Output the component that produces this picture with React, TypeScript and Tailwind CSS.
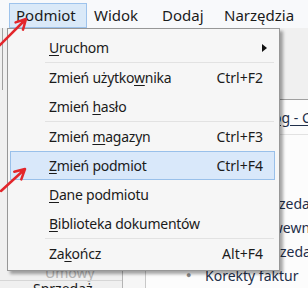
import React from 'react';

type Item =
  | { kind: 'sep' }
  | { kind: 'item'; pre: string; key: string; post: string; shortcut?: string; sub?: boolean; active?: boolean };

const menu: Item[] = [
  { kind: 'item', pre: '', key: 'U', post: 'ruchom', sub: true },
  { kind: 'sep' },
  { kind: 'item', pre: 'Zmień użytko', key: 'w', post: 'nika', shortcut: 'Ctrl+F2' },
  { kind: 'item', pre: 'Zmień ', key: 'h', post: 'asło' },
  { kind: 'sep' },
  { kind: 'item', pre: 'Zmień ', key: 'm', post: 'agazyn', shortcut: 'Ctrl+F3' },
  { kind: 'item', pre: '', key: 'Z', post: 'mień podmiot', shortcut: 'Ctrl+F4', active: true },
  { kind: 'item', pre: '', key: 'D', post: 'ane podmiotu' },
  { kind: 'item', pre: '', key: 'B', post: 'iblioteka dokumentów' },
  { kind: 'sep' },
  { kind: 'item', pre: 'Za', key: 'k', post: 'ończ', shortcut: 'Alt+F4' },
];

const bar = [
  { label: 'Podmiot', w: 'w-[78px]', active: true },
  { label: 'Widok', w: 'w-[68px]' },
  { label: 'Dodaj', w: 'w-[62px]' },
  { label: 'Narzędzia', w: 'w-[90px]' },
];

const list = ['Faktury sprzedaży', 'Rozchody wewnętrzne', 'Korekty sprzedaży', 'Korekty faktur'];

export default function App() {
  return (
    <div className="relative w-[308px] h-[299px] overflow-hidden bg-white font-['Noto_Sans',sans-serif] text-[14px] text-[#1b1b1b]">
      {/* menu bar */}
      <div className="flex h-[28px] pt-[3px] pl-[9px] bg-[#f8f9fb] text-[15px]">
        {bar.map((b) => (
          <div
            key={b.label}
            className={`${b.w} shrink-0 h-[25px] flex items-center pl-[6px] border ${
              b.active ? 'bg-[#dae9f8] border-[#9ec3ec]' : 'border-transparent'
            }`}
          >
            {b.label}
          </div>
        ))}
      </div>

      {/* window content behind the menu */}
      <div className="flex h-[260px] overflow-hidden">
        <div className="w-[123px] shrink-0 bg-[#f0f0f0] border-r border-[#b4b4b4] flex flex-col">
          <div className="ml-[2px] h-[62px] border-l border-[#a0a0a0]" />
          <div className="mt-auto h-[14px] pl-[45px] text-[#b4b4b4] leading-[14px]">Umowy</div>
          <div className="h-[8px] overflow-hidden border-t border-[#d6d6d6] pl-[33px] leading-[16px]">Sprzedaż</div>
        </div>
        <div className="w-[23px] shrink-0 bg-[#f6f6f6] border-r border-[#c8c8c8]" />
        <div className="flex-1 min-w-0 flex flex-col bg-[#fcfcfc] text-[#1f2f4a]">
          <div className="h-[72px] shrink-0 bg-[#f0f0f0] border-b border-[#a0a0a0]" />
          <div className="h-[35px] shrink-0 flex items-center pl-[94px] border-b border-[#e2e2e2] whitespace-nowrap">
            <span className="underline underline-offset-2">Katalog - Cennik</span>
          </div>
          <div className="pt-[56px] flex flex-col">
            {list.map((t) => (
              <div key={t} className="h-[24px] flex items-center pl-[40px] whitespace-nowrap">
                <span className="w-[19px] shrink-0 text-[#8a8a8a] text-[9px]">●</span>
                {t}
              </div>
            ))}
          </div>
        </div>
      </div>

      {/* dropdown */}
      <div className="absolute left-[7px] top-[28px] w-[273px] h-[243px] bg-[#f6f6f6] border border-[#979797] pt-[4px] shadow-[3px_3px_3px_rgba(0,0,0,0.35)] tracking-[-0.25px]">
        {menu.map((m, i) =>
          m.kind === 'sep' ? (
            <div key={i} className="ml-[37px] mr-[5px] h-[1px] bg-[#e2e2e2]" />
          ) : (
            <div
              key={i}
              className={`h-[29px] ml-[2px] mr-[4px] flex items-center pl-[38px] border ${
                m.active ? 'bg-[#d9e8fa] border-[#99c0ea]' : 'border-transparent'
              }`}
            >
              <span className="flex-1 whitespace-nowrap">
                {m.pre}
                <span className="underline underline-offset-2">{m.key}</span>
                {m.post}
              </span>
              {m.shortcut && <span className="pr-[11px] tracking-normal">{m.shortcut}</span>}
              {m.sub && (
                <svg width="5" height="8" viewBox="0 0 5 8" className="mr-[7px]">
                  <path d="M0 0 L5 4 L0 8 Z" fill="#111" />
                </svg>
              )}
            </div>
          )
        )}
      </div>

      {/* red arrows */}
      <svg className="absolute inset-0 pointer-events-none" width="308" height="299" viewBox="0 0 308 299">
        <g stroke="#e3262b" strokeWidth="2.5" strokeLinecap="round" strokeLinejoin="round" fill="none">
          <path d="M-2 47 L26 19 M15.6 22.4 L26 19 L23 29.6" />
          <path d="M1 191 L25 169 M14.3 171.7 L25 169 L21.3 179.4" />
        </g>
      </svg>
    </div>
  );
}
